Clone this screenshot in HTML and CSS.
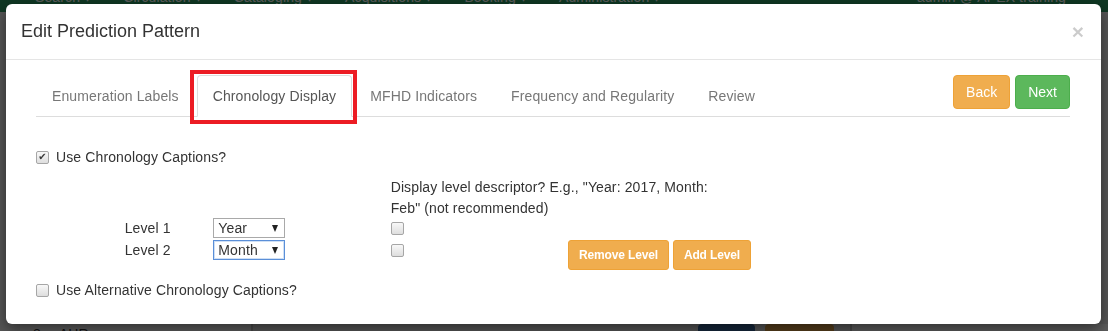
FILE: index.html
```html
<!DOCTYPE html>
<html lang="en">
<head>
    <meta charset="UTF-8">
    <title>Edit Prediction Pattern</title>
    <link rel="stylesheet" href="styles.css">
</head>
<body>
    <div class="page">
        <div class="navbar">
            <ul class="nav-menu">
                <li>Search ▾</li>
                <li>Circulation ▾</li>
                <li>Cataloging ▾</li>
                <li>Acquisitions ▾</li>
                <li>Booking ▾</li>
                <li>Administration ▾</li>
            </ul>
            <div class="nav-user">admin @ APEX training</div>
        </div>
        <div class="page-body">
            <div class="side-panel"><span>8</span><span>AHR</span></div>
            <div class="main-panel">
                <span class="bg-btn bg-blue"></span>
                <span class="bg-btn bg-orange"></span>
            </div>
            <div class="right-panel"></div>
        </div>
    </div>

    <div class="backdrop"></div>

    <div class="modal">
        <div class="modal-header">
            <h4>Edit Prediction Pattern</h4>
            <button class="close">&times;</button>
        </div>
        <div class="modal-body">
            <div class="tab-bar">
                <ul class="nav-tabs">
                    <li><a>Enumeration Labels</a></li>
                    <li class="active"><a>Chronology Display<span class="highlight"></span></a></li>
                    <li><a>MFHD Indicators</a></li>
                    <li><a>Frequency and Regularity</a></li>
                    <li><a>Review</a></li>
                </ul>
                <div class="tab-actions">
                    <button class="btn btn-warning">Back</button>
                    <button class="btn btn-success">Next</button>
                </div>
            </div>

            <div class="tab-content">
                <label class="check-line first"><input type="checkbox" checked> Use Chronology Captions?</label>

                <div class="grid-row">
                    <div class="descriptor">Display level descriptor? E.g., "Year: 2017, Month: Feb" (not recommended)</div>
                </div>

                <div class="grid-row level-row">
                    <div class="level-label">Level 1</div>
                    <div class="level-select"><span class="select-wrap"><select><option>Year</option></select></span></div>
                    <div class="level-check"><input type="checkbox"></div>
                </div>
                <div class="grid-row level-row">
                    <div class="level-label">Level 2</div>
                    <div class="level-select"><span class="select-wrap"><select class="focused"><option>Month</option></select></span></div>
                    <div class="level-check"><input type="checkbox"></div>
                    <div class="level-actions">
                        <button class="btn btn-sm btn-warning">Remove Level</button>
                        <button class="btn btn-sm btn-warning">Add Level</button>
                    </div>
                </div>

                <label class="check-line last"><input type="checkbox"> Use Alternative Chronology Captions?</label>
            </div>
        </div>
    </div>
</body>
</html>
```

FILE: styles.css
```css
body {
    margin: 0;
    font-family: "Liberation Sans", Arial, sans-serif;
    font-size: 14px;
    line-height: 20px;
    letter-spacing: 0.12px;
    color: #333;
    background: #eee;
    overflow: hidden;
}

/* page behind the modal */
.page {
    height: 331px;
    display: flex;
    flex-direction: column;
}

.navbar {
    height: 12px;
    background: #2a9a62;
    color: #fff;
    display: flex;
    justify-content: space-between;
    overflow: hidden;
    padding: 0 42px 0 35px;
}

.nav-menu {
    list-style: none;
    margin: -13px 0 0;
    padding: 0;
    display: flex;
    gap: 32px;
}

.nav-user {
    margin-top: -13px;
}

.page-body {
    flex: 1;
    display: flex;
    align-items: flex-end;
}

.side-panel {
    margin-left: 20px;
    width: 233px;
    height: 20px;
    background: #fff;
    border-right: 2px solid #ccc;
    display: flex;
    gap: 18px;
    padding-left: 13px;
    box-sizing: border-box;
    margin-bottom: -13px;
}

.main-panel {
    width: 597px;
    height: 20px;
    display: flex;
    gap: 10px;
    justify-content: flex-end;
    padding-right: 16px;
    box-sizing: border-box;
    margin-bottom: -13px;
}

.bg-btn {
    width: 57px;
    height: 20px;
    border-radius: 4px 4px 0 0;
}

.bg-blue { background: #3c6ea6; }
.bg-orange { background: #f0ad4e; width: 69px; }

.right-panel {
    flex: 1;
    height: 20px;
    background: #fff;
    border-left: 2px solid #ccc;
    margin-bottom: -13px;
}

.backdrop {
    position: fixed;
    inset: 0;
    background: rgba(0, 0, 0, 0.64);
}

/* modal */
.modal {
    position: fixed;
    top: 4px;
    left: 6px;
    width: 1095px;
    height: 320px;
    background: #fff;
    border-radius: 6px;
    box-shadow: 0 5px 15px rgba(0, 0, 0, 0.5);
}

.modal-header {
    padding: 15px;
    border-bottom: 1px solid #e5e5e5;
    display: flex;
    justify-content: space-between;
    align-items: flex-start;
}

.modal-header h4 {
    margin: 0;
    font-size: 18px;
    font-weight: normal;
    line-height: 25px;
    letter-spacing: 0;
}

.close {
    font-family: "Liberation Sans", Arial, sans-serif;
    font-size: 21px;
    font-weight: bold;
    line-height: 1;
    color: #000;
    opacity: 0.2;
    background: none;
    border: 0;
    padding: 0;
    margin-top: 2px;
    margin-right: 2px;
}

.modal-body {
    padding: 15px 31px 15px 30px;
}

.tab-bar {
    display: flex;
    align-items: flex-start;
    border-bottom: 1px solid #ddd;
}

.nav-tabs {
    display: flex;
    list-style: none;
    margin: 0 0 -1px;
    padding: 0;
    flex: 1;
}

.nav-tabs a {
    display: block;
    position: relative;
    padding: 10px 15px;
    margin-right: 2px;
    line-height: 20px;
    color: #777;
    border: 1px solid transparent;
    border-radius: 4px 4px 0 0;
}

.nav-tabs .active a {
    color: #555;
    background: #fff;
    border-color: #ddd;
    border-bottom-color: #fff;
}

/* red annotation box round the active tab */
.highlight {
    position: absolute;
    top: -6px;
    left: -8px;
    right: -6px;
    bottom: -8px;
    border: 4px solid #ec1c24;
}

.tab-actions {
    display: flex;
    gap: 5px;
}

.btn {
    font-family: "Liberation Sans", Arial, sans-serif;
    font-size: 14px;
    line-height: 20px;
    padding: 6px 12px;
    color: #fff;
    border: 1px solid transparent;
    border-radius: 4px;
    letter-spacing: 0;
}

.btn-warning {
    background: #f0ad4e;
    border-color: #eea236;
}

.btn-success {
    background: #5cb85c;
    border-color: #4cae4c;
}

.btn-sm {
    font-size: 12px;
    font-weight: bold;
    line-height: 18px;
    padding: 5px 10px;
    border-radius: 3px;
    letter-spacing: -0.15px;
}

/* tab content */
.check-line {
    display: flex;
    align-items: center;
    gap: 7px;
}

.check-line.first { margin-top: 30px; }
.check-line.last { margin-top: 10px; }

input[type="checkbox"] {
    appearance: none;
    -webkit-appearance: none;
    width: 13px;
    height: 13px;
    margin: 0;
    border: 1px solid #a6a6a6;
    border-radius: 2px;
    background: linear-gradient(#f8f8f8, #dedede);
    position: relative;
    box-sizing: border-box;
}

input[type="checkbox"]:checked::after {
    content: "✔";
    position: absolute;
    inset: 0;
    display: flex;
    align-items: center;
    justify-content: center;
    font-family: "DejaVu Sans", sans-serif;
    font-size: 10px;
    line-height: 1;
    color: #3a3a3a;
}

.grid-row {
    display: grid;
    grid-template-columns: repeat(12, 1fr);
    margin: 0 -15px;
}

.grid-row > div {
    padding: 0 15px;
}

.descriptor {
    grid-column: 5 / span 4;
    margin-top: 10px;
    line-height: 20.5px;
}

.level-row {
    min-height: 22px;
    align-items: start;
}

.level-label { grid-column: 2; }
.level-select { grid-column: 3 / span 2; }

.level-check {
    grid-column: 5 / span 2;
    height: 20px;
    display: flex;
    align-items: center;
}

.level-actions {
    grid-column: 7 / span 6;
    display: flex;
    gap: 4px;
}

.select-wrap {
    position: relative;
    display: inline-block;
}

.select-wrap::after {
    content: "";
    position: absolute;
    right: 7px;
    top: 7px;
    border-left: 3.5px solid transparent;
    border-right: 3.5px solid transparent;
    border-top: 7px solid #222;
}

select {
    appearance: none;
    -webkit-appearance: none;
    display: block;
    width: 72px;
    height: 20px;
    margin: 0;
    padding: 0 0 0 4px;
    font-family: "Liberation Sans", Arial, sans-serif;
    font-size: 14px;
    letter-spacing: 0.12px;
    color: #333;
    background: #fff;
    border: 1px solid #a9a9a9;
    border-radius: 0;
}

select.focused {
    border-color: #5b8fd8;
    box-shadow: inset 0 0 0 1px #cfe0f5;
}
```
